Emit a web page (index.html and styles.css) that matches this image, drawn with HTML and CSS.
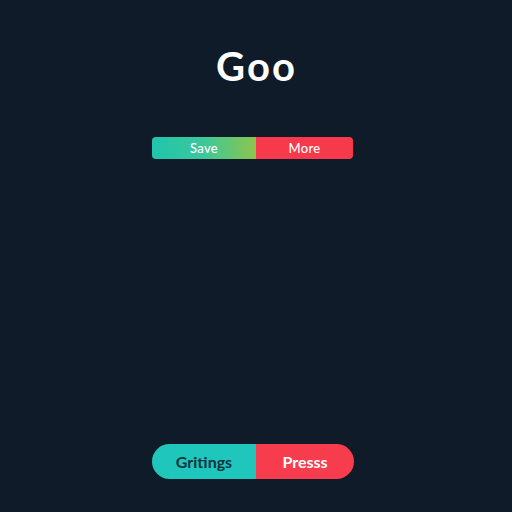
FILE: index.html
```html
<!DOCTYPE html>
<html lang="en">
<head>
    <meta charset="UTF-8">
    <meta name="viewport" content="width=device-width, initial-scale=1.0">
    <title>Goo</title>
    <link rel="stylesheet" href="styles.css">
</head>
<body>
    <div class="screen">
        <h1 class="title">Goo</h1>

        <!-- Top split toolbar -->
        <div class="split-bar">
            <button class="seg seg-save">Save</button>
            <button class="seg seg-more">More</button>
        </div>

        <!-- Bottom pill actions -->
        <div class="split-pill">
            <button class="pill pill-left">Gritings</button>
            <button class="pill pill-right">Presss</button>
        </div>
    </div>
</body>
</html>
```

FILE: styles.css
```css
html, body {
    margin: 0;
    padding: 0;
    background-color: #0f1b28;
}
.screen {
    height: 512px;
    display: flex;
    flex-direction: column;
    align-items: center;
    font-family: "Lato", "Noto Sans", sans-serif;
}
.title {
    margin: 46px 0 0 1px;
    font-size: 40px;
    line-height: 40px;
    font-weight: 700;
    letter-spacing: 2px;
    color: #ffffff;
}
.split-bar {
    display: flex;
    align-self: flex-start;
    margin: 51px 0 0 152px;
    width: 201px;
    height: 22px;
    border-radius: 4px;
    overflow: hidden;
}
.seg {
    border: none;
    padding: 0;
    margin: 0;
    color: #ffffff;
    font-family: inherit;
    font-size: 13px;
    font-weight: 500;
    letter-spacing: 0.3px;
    display: flex;
    align-items: center;
    justify-content: center;
}
.seg-save {
    width: 104px;
    background: linear-gradient(90deg, #1fc5ad 0%, #3dc79a 50%, #8cc64b 100%);
}
.seg-more {
    flex: 1;
    background-color: #f63a4c;
}
.split-pill {
    display: flex;
    align-self: flex-start;
    margin: auto 0 33px 152px;
    width: 202px;
    height: 35px;
    border-radius: 18px;
    overflow: hidden;
}
.pill {
    border: none;
    padding: 0;
    margin: 0;
    font-family: inherit;
    font-size: 16px;
    font-weight: 700;
    display: flex;
    align-items: center;
    justify-content: center;
}
.pill-left {
    width: 104px;
    background-color: #1fc6bb;
    color: #0d3440;
}
.pill-right {
    flex: 1;
    background-color: #f63c4d;
    color: #ffffff;
}
```
